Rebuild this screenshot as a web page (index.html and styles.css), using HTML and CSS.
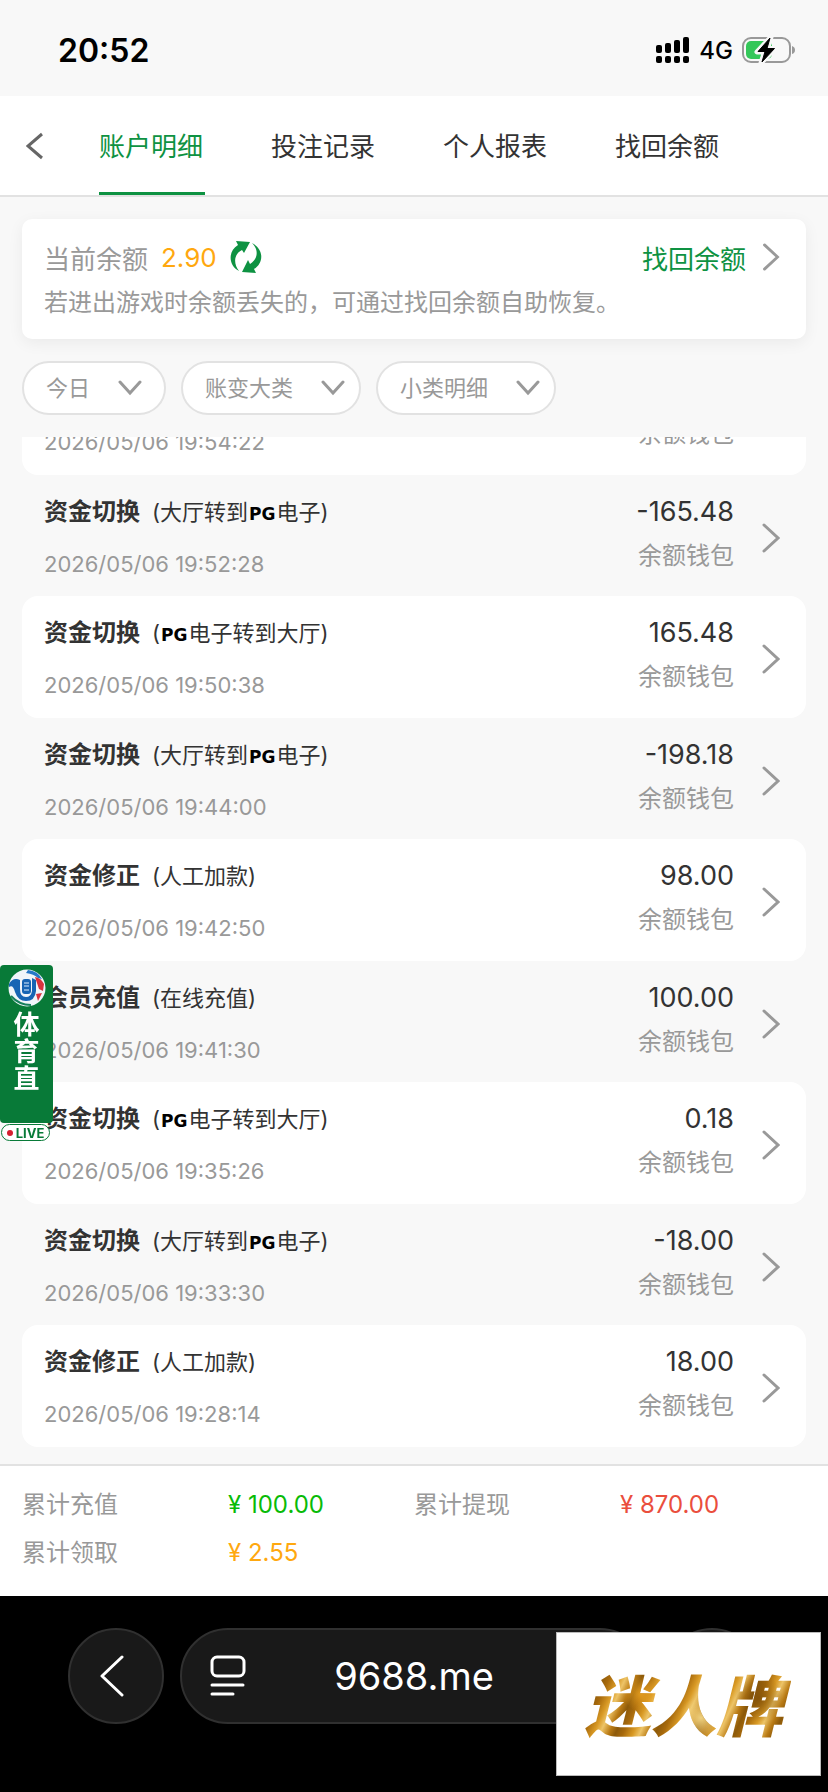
FILE: index.html
```html
<!DOCTYPE html>
<html lang="zh-CN">
<head>
    <meta charset="UTF-8">
    <meta name="viewport" content="width=device-width, initial-scale=1.0">
    <title>账户明细</title>
    <link rel="stylesheet" href="styles.css">
</head>
<body>
<svg class="sprite" aria-hidden="true">
    <symbol id="icon-next" viewBox="0 0 18 30">
        <path d="M2 2 L16 15 L2 28" fill="none" stroke="currentColor" stroke-width="3" stroke-linecap="round"/>
    </symbol>
    <symbol id="icon-down" viewBox="0 0 24 16">
        <path d="M2 2 L12 13 L22 2" fill="none" stroke="currentColor" stroke-width="3" stroke-linecap="round"/>
    </symbol>
</svg>

<div class="app">
    <div class="status-bar">
        <span class="clock">20:52</span>
        <div class="status-icons">
            <svg width="34" height="26" viewBox="0 0 34 26">
                <rect x="0" y="8" width="6" height="8" rx="2"/>
                <rect x="9" y="6" width="6" height="10" rx="2"/>
                <rect x="18" y="3" width="6" height="13" rx="2"/>
                <rect x="27" y="0" width="6" height="16" rx="2"/>
                <rect x="0" y="19" width="6" height="7" rx="2"/>
                <rect x="9" y="19" width="6" height="7" rx="2"/>
                <rect x="18" y="19" width="6" height="7" rx="2"/>
                <rect x="27" y="19" width="6" height="7" rx="2"/>
            </svg>
            <span class="network">4G</span>
            <svg width="54" height="28" viewBox="0 0 54 28">
                <rect x="1" y="2" width="47" height="24" rx="8" fill="none" stroke="#999" stroke-width="2"/>
                <rect x="4" y="5" width="26" height="18" rx="5" fill="#34c759"/>
                <path d="M50 10 q3 1 3 4 t-3 4z" fill="#999"/>
                <path d="M29 1 L15 16 H22.500 L19 27 L33 12.500 H25.500 Z" fill="#000" stroke="#f8f8f8" stroke-width="5" stroke-linejoin="round"/>
                <path d="M28 2 L16 15.500 H23 L20 26 L32.500 12.500 H25 Z" fill="#000" stroke="#000" stroke-linejoin="round"/>
            </svg>
        </div>
    </div>

    <header class="header">
        <button class="back" aria-label="返回">
            <svg width="18" height="28" viewBox="0 0 18 28"><path d="M16 2 L2 14 L16 26" fill="none" stroke="#666" stroke-width="3"/></svg>
        </button>
        <nav class="tabs">
            <a href="#detail" class="tab active">账户明细</a>
            <a href="#bets" class="tab">投注记录</a>
            <a href="#report" class="tab">个人报表</a>
            <a href="#recover" class="tab">找回余额</a>
        </nav>
    </header>

    <section class="balance-card">
        <div class="balance-row">
            <span>当前余额</span>
            <span class="balance">2.90</span>
            <button class="refresh" aria-label="刷新">
                <svg width="32" height="34" viewBox="0 0 32 34" fill="#0e9242">
                    <path d="M6 1 L20 2 L14 13 L12 10 C4 14 3 23 9 31 C-2 25 -2 11 8 5 Z"/>
                    <path d="M26 33 L12 32 L18 20 L20 24 C28 19 29 10 22 3 C34 9 34 23 24 29 Z"/>
                </svg>
            </button>
            <a href="#recover" class="recover">找回余额
                <svg class="next" width="18" height="28"><use href="#icon-next"/></svg>
            </a>
        </div>
        <p class="tip">若进出游戏时余额丢失的，可通过找回余额自助恢复。</p>
    </section>

    <form class="filters">
        <label class="filter">
            <select aria-label="日期"><option>今日</option></select>
            <svg width="24" height="16"><use href="#icon-down"/></svg>
        </label>
        <label class="filter">
            <select aria-label="大类"><option>账变大类</option></select>
            <svg width="24" height="16"><use href="#icon-down"/></svg>
        </label>
        <label class="filter">
            <select aria-label="小类"><option>小类明细</option></select>
            <svg width="24" height="16"><use href="#icon-down"/></svg>
        </label>
    </form>

    <main class="records">
        <a href="#r0" class="record">
            <div class="info">
                <h2></h2>
                <time>2026/05/06 19:54:22</time>
            </div>
            <div class="money"><strong></strong><span>余额钱包</span></div>
            <span class="next-space"></span>
        </a>
        <a href="#r1" class="record">
            <div class="info">
                <h2>资金切换 <small>(大厅转到<b class="pg">PG</b>电子)</small></h2>
                <time>2026/05/06 19:52:28</time>
            </div>
            <div class="money"><strong>-165.48</strong><span>余额钱包</span></div>
            <svg class="next" width="18" height="30"><use href="#icon-next"/></svg>
        </a>
        <a href="#r2" class="record">
            <div class="info">
                <h2>资金切换 <small>(<b class="pg">PG</b>电子转到大厅)</small></h2>
                <time>2026/05/06 19:50:38</time>
            </div>
            <div class="money"><strong>165.48</strong><span>余额钱包</span></div>
            <svg class="next" width="18" height="30"><use href="#icon-next"/></svg>
        </a>
        <a href="#r3" class="record">
            <div class="info">
                <h2>资金切换 <small>(大厅转到<b class="pg">PG</b>电子)</small></h2>
                <time>2026/05/06 19:44:00</time>
            </div>
            <div class="money"><strong>-198.18</strong><span>余额钱包</span></div>
            <svg class="next" width="18" height="30"><use href="#icon-next"/></svg>
        </a>
        <a href="#r4" class="record">
            <div class="info">
                <h2>资金修正 <small>(人工加款)</small></h2>
                <time>2026/05/06 19:42:50</time>
            </div>
            <div class="money"><strong>98.00</strong><span>余额钱包</span></div>
            <svg class="next" width="18" height="30"><use href="#icon-next"/></svg>
        </a>
        <a href="#r5" class="record">
            <div class="info">
                <h2>会员充值 <small>(在线充值)</small></h2>
                <time>2026/05/06 19:41:30</time>
            </div>
            <div class="money"><strong>100.00</strong><span>余额钱包</span></div>
            <svg class="next" width="18" height="30"><use href="#icon-next"/></svg>
        </a>
        <a href="#r6" class="record">
            <div class="info">
                <h2>资金切换 <small>(<b class="pg">PG</b>电子转到大厅)</small></h2>
                <time>2026/05/06 19:35:26</time>
            </div>
            <div class="money"><strong>0.18</strong><span>余额钱包</span></div>
            <svg class="next" width="18" height="30"><use href="#icon-next"/></svg>
        </a>
        <a href="#r7" class="record">
            <div class="info">
                <h2>资金切换 <small>(大厅转到<b class="pg">PG</b>电子)</small></h2>
                <time>2026/05/06 19:33:30</time>
            </div>
            <div class="money"><strong>-18.00</strong><span>余额钱包</span></div>
            <svg class="next" width="18" height="30"><use href="#icon-next"/></svg>
        </a>
        <a href="#r8" class="record">
            <div class="info">
                <h2>资金修正 <small>(人工加款)</small></h2>
                <time>2026/05/06 19:28:14</time>
            </div>
            <div class="money"><strong>18.00</strong><span>余额钱包</span></div>
            <svg class="next" width="18" height="30"><use href="#icon-next"/></svg>
        </a>
    </main>

    <footer class="totals">
        <div class="total"><span>累计充值</span><span class="green">¥ 100.00</span></div>
        <div class="total"><span>累计提现</span><span class="red">¥ 870.00</span></div>
        <div class="total"><span>累计领取</span><span class="orange">¥ 2.55</span></div>
    </footer>

    <div class="browser-bar">
        <button class="round" aria-label="后退">
            <svg width="26" height="42" viewBox="0 0 26 42"><path d="M23 2 L3 21 L23 40" fill="none" stroke="#fff" stroke-width="3" stroke-linecap="round" stroke-linejoin="round"/></svg>
        </button>
        <button class="address">
            <svg width="36" height="42" viewBox="0 0 36 42" fill="none" stroke="#fff" stroke-linecap="round">
                <rect x="2" y="2" width="32" height="19" rx="5" stroke-width="3"/>
                <path d="M2 30 H33 M2 39 H23" stroke-width="3"/>
            </svg>
            <span>9688.me</span>
        </button>
        <button class="round" aria-label="更多"></button>
    </div>
</div>

<a href="#live" class="live-widget">
    <div class="live-banner">
        <svg width="38" height="38" viewBox="0 0 38 38">
            <circle cx="19" cy="19" r="18.500" fill="#f1f5fa"/>
            <path d="M1 15 Q5 8 12 11 V20 Q12 28 18 28 Q23 28 24 22 V9 L28 11 V22 Q27 32 18 32 Q10 32 7 23 Q5 15 1 18Z" fill="#1764b4"/>
            <path d="M20 1 Q30 2 34 10 L30 9 Q26 5 18 4Z" fill="#2677c7"/>
            <path d="M27 8 Q33 9 36 15 L35 22 L31 20 L29 14Z" fill="#d9333f"/>
            <path d="M28 25 L34 24 L30 32Z" fill="#d9333f"/>
            <rect x="14" y="10" width="9" height="15" rx="3" fill="#1764b4"/>
            <path d="M16 14 H21 M16 17 H21 M16 21 H21" stroke="#dcecff"/>
            <path d="M3 27 Q11 36 23 36" stroke="#17805c" stroke-width="2" fill="none"/>
        </svg>
        <span class="live-name">体育直</span>
    </div>
    <span class="live-tag">LIVE</span>
</a>

<a href="#ad" class="ad"><span>迷人牌</span></a>
</body>
</html>
```
FILE: styles.css
```css
* {
    box-sizing: border-box;
}
body {
    margin: 0;
    font-family: Inter, "Noto Sans CJK SC", sans-serif;
    font-size: 24px;
    color: #333;
    background: #f8f8f8;
}
a {
    color: inherit;
    text-decoration: none;
}
button, select {
    font: inherit;
    color: inherit;
    background: none;
    border: 0;
    padding: 0;
    margin: 0;
}
svg {
    flex-shrink: 0;
}
.sprite {
    position: absolute;
    width: 0;
    height: 0;
}
.app {
    display: flex;
    flex-direction: column;
    height: 100vh;
}

/* status bar */
.status-bar {
    display: flex;
    align-items: center;
    justify-content: space-between;
    height: 96px;
    flex-shrink: 0;
    padding: 4px 32px 0 58px;
    color: #000;
}
.clock {
    font-size: 32px;
    font-weight: 600;
}
.status-icons {
    display: flex;
    align-items: center;
    gap: 9px;
}
.network {
    font-weight: 500;
}

/* header tabs */
.header {
    display: flex;
    flex-shrink: 0;
    height: 101px;
    padding-left: 26px;
    background: #fff;
    border-bottom: 2px solid #e2e2e2;
}
.back {
    display: flex;
    align-items: center;
    width: 73px;
}
.tabs {
    display: flex;
    gap: 66px;
    font-size: 26px;
}
.tab {
    display: flex;
    align-items: center;
    padding-right: 2px;
    border-bottom: 3px solid transparent;
}
.tab.active {
    color: #0e9242;
    border-color: #0e9242;
}

/* balance */
.balance-card {
    flex-shrink: 0;
    margin: 22px 22px 0;
    padding: 16px 26px 13px 22px;
    color: #999;
    background: #fff;
    border-radius: 10px;
    box-shadow: 0 4px 16px rgba(0, 0, 0, 0.06);
}
.balance-row {
    display: flex;
    align-items: center;
    height: 44px;
    font-size: 26px;
}
.balance {
    margin: 0 13px;
    color: #ffa80f;
}
.refresh {
    display: flex;
}
.recover {
    display: flex;
    align-items: center;
    gap: 16px;
    margin-left: auto;
    color: #0e9242;
}
.next {
    color: #999;
}
.tip {
    margin: 0;
    line-height: 47px;
}

/* filters */
.filters {
    display: flex;
    flex-shrink: 0;
    gap: 15px;
    padding: 22px 22px;
    font-size: 22px;
    color: #999;
}
.filter {
    display: flex;
    align-items: center;
    gap: 27px;
    min-width: 144px;
    height: 54px;
    padding: 0 14px 0 22px;
    background: #fff;
    border: 2px solid #e2e2e2;
    border-radius: 27px;
}
.filter select {
    appearance: none;
    outline: none;
}
.filter svg {
    pointer-events: none;
}

/* records, kept scrolled to the end */
.records {
    display: flex;
    flex: 1;
    flex-direction: column;
    justify-content: flex-end;
    min-height: 0;
    overflow: hidden;
    padding: 0 22px 17px;
}
.record {
    display: flex;
    flex-shrink: 0;
    align-items: center;
    padding: 15px 26px 10px 22px;
    line-height: 44px;
    border-radius: 16px;
}
.record:nth-child(odd) {
    padding-bottom: 11px;
    background: #fff;
}
.info, .money {
    display: flex;
    flex-direction: column;
}
.info {
    flex: 1;
    gap: 8px;
}
.info h2 {
    display: flex;
    gap: 12px;
    min-height: 44px;
    margin: 0;
    font-size: 24px;
    font-weight: 700;
}
.info small {
    font-size: 22px;
    font-weight: 400;
}
.pg {
    margin: 0 1px;
    font-family: "DejaVu Sans", sans-serif;
    font-size: 17px;
    line-height: 1;
    color: #000;
}
.info time {
    font-size: 22px;
    color: #999;
}
.money {
    align-self: flex-start;
    align-items: flex-end;
    margin-right: 28px;
    color: #999;
}
.money strong {
    min-height: 44px;
    font-size: 27px;
    font-weight: 400;
    color: #333;
}
.next-space {
    width: 18px;
}

/* totals */
.totals {
    display: grid;
    flex-shrink: 0;
    grid-template-columns: 1fr 1fr;
    padding: 15px 22px 19px;
    line-height: 48px;
    background: #fff;
    border-top: 2px solid #e2e2e2;
}
.total {
    display: grid;
    grid-template-columns: 206px 1fr;
    color: #999;
}
.total .green {
    color: #09bb07;
}
.total .red {
    color: #ea4e3d;
}
.total .orange {
    color: #ffa80f;
}

/* browser bar */
.browser-bar {
    display: flex;
    flex-shrink: 0;
    gap: 16px;
    padding: 32px 68px 68px;
    color: #fff;
    background: #000;
}
.round, .address {
    display: flex;
    align-items: center;
    height: 96px;
    background: #191919;
    border: 2px solid #303030;
    border-radius: 48px;
}
.round {
    justify-content: center;
    width: 96px;
    padding-right: 8px;
}
.address {
    flex: 1;
    padding: 0 64px 0 28px;
    font-size: 38px;
}
.address span {
    flex: 1;
    text-align: center;
}

/* floating live entry */
.live-widget {
    position: fixed;
    left: 0;
    top: 965px;
    width: 53px;
}
.live-banner {
    display: flex;
    flex-direction: column;
    align-items: center;
    height: 158px;
    padding-top: 4px;
    background: #087a38;
    border-radius: 4px;
}
.live-name {
    width: 26px;
    margin-top: 4px;
    font-size: 26px;
    font-weight: 700;
    line-height: 27px;
    color: #fff;
}
.live-tag {
    display: flex;
    align-items: center;
    justify-content: center;
    gap: 3px;
    width: 49px;
    height: 17px;
    margin: 1px;
    font-size: 13px;
    font-weight: 700;
    color: #087a38;
    background: #fff;
    border: 1px solid #087a38;
    border-radius: 9px;
}
.live-tag::before {
    content: "";
    width: 6px;
    height: 6px;
    background: #d51f30;
    border-radius: 50%;
}

/* floating ad */
.ad {
    position: fixed;
    right: 7px;
    bottom: 16px;
    display: flex;
    align-items: center;
    justify-content: center;
    width: 265px;
    height: 144px;
    padding: 0 10px 4px 0;
    background: #fff;
    border: 1px solid #bbb;
}
.ad span {
    padding: 0 8px;
    font-family: "Noto Sans CJK SC", sans-serif;
    font-size: 66px;
    font-style: italic;
    font-weight: 900;
    line-height: 80px;
    color: transparent;
    background:
        radial-gradient(circle at 30% 40%, rgba(232, 160, 32, 0.9) 0, transparent 18px),
        radial-gradient(circle at 58% 70%, rgba(250, 222, 140, 0.9) 0, transparent 22px),
        radial-gradient(circle at 85% 45%, rgba(125, 78, 8, 0.8) 0, transparent 24px),
        repeating-linear-gradient(115deg, #a86a0c 0, #d99a25 9px, #edc468 15px, #b97a14 23px, #8d5a0a 29px, #a86a0c 36px);
    -webkit-background-clip: text;
    background-clip: text;
}
```
